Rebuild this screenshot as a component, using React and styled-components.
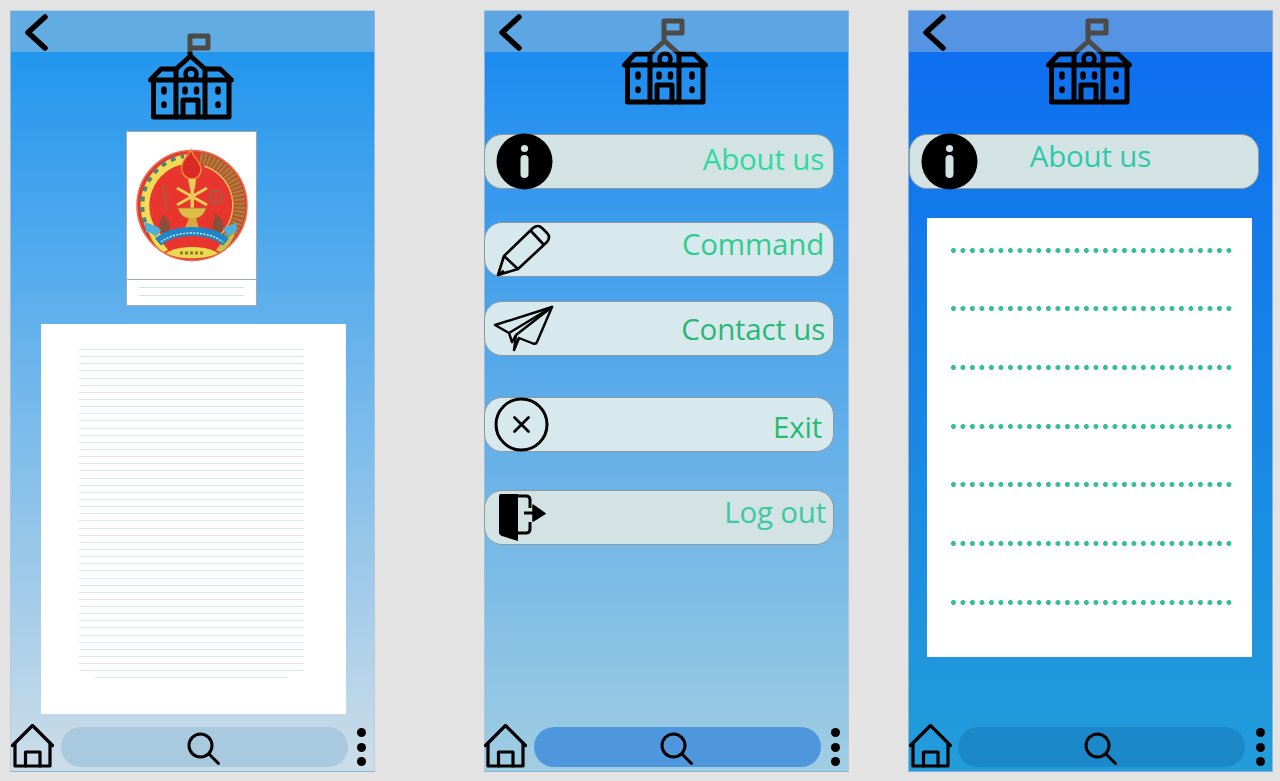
import React from 'react';
import styled, { createGlobalStyle } from 'styled-components';

const GlobalStyle = createGlobalStyle`
  html, body {
    margin: 0;
    padding: 0;
    background: #e3e3e3;
    overflow: hidden;
  }
  * { box-sizing: border-box; }
`;

const Page = styled.div`
  width: 1280px;
  height: 781px;
  padding: 10px 0 0 10px;
  display: flex;
  font-family: "Open Sans", "Noto Sans", sans-serif;
`;

const Phone = styled.div`
  width: 365px;
  height: 762px;
  margin-left: ${(p) => p.$left || 0}px;
  display: flex;
  flex-direction: column;
  border: 1px solid rgba(185, 198, 210, 0.7);
  background: linear-gradient(180deg, ${(p) => p.$from} 5%, ${(p) => p.$to} 100%);
`;

const TopBar = styled.div`
  height: 41px;
  flex: none;
  padding-left: 12px;
  background: rgba(219, 216, 204, 0.35);
  position: relative;
  z-index: 2;
  svg { display: block; }
`;

const LogoWrap = styled.div`
  height: 87px;
  flex: none;
  margin-top: ${(p) => p.$top}px;
  display: flex;
  justify-content: center;
  padding-right: ${(p) => p.$right}px;
`;

const Content = styled.div`
  flex: 1;
  display: flex;
  flex-direction: column;
  align-items: flex-start;
`;

const CrestCard = styled.div`
  width: 131px;
  height: 175px;
  margin: 11px 0 0 115px;
  background: #fff;
  border: 1px solid #a3a8ad;
  display: flex;
  flex-direction: column;
`;

const CrestArea = styled.div`
  height: 148px;
  flex: none;
  padding: 16px 0 0 9px;
  border-bottom: 1px solid #a3a8ad;
  svg { display: block; }
`;

const CrestCaption = styled.div`
  flex: 1;
  display: flex;
  flex-direction: column;
  align-items: center;
  gap: 7px;
  padding-top: 7px;
`;

const CaptionLine = styled.div`
  width: 105px;
  height: 1px;
  background: #d3e5ea;
`;

const TextSheet = styled.div`
  width: 305px;
  height: 390px;
  margin: 18px 0 0 30px;
  padding: 25px 0 0 38px;
  background: #fff;
  display: flex;
  flex-direction: column;
  align-items: flex-start;
  gap: 6.15px;
`;

const SheetLine = styled.div`
  width: ${(p) => p.$width}px;
  height: 1px;
  margin-left: ${(p) => p.$indent || 0}px;
  background: #d9e8ee;
`;

const MenuList = styled.div`
  display: flex;
  flex-direction: column;
  padding-top: ${(p) => p.$top}px;
  margin-left: ${(p) => p.$left || 0}px;
`;

const MenuButton = styled.div`
  width: 350px;
  height: 55px;
  margin-top: ${(p) => p.$gap || 0}px;
  padding: 0 ${(p) => p.$pad}px 0 ${(p) => p.$iconLeft}px;
  display: flex;
  align-items: center;
  justify-content: space-between;
  border: 1px solid #8a9aa2;
  border-radius: 18px;
  background: ${(p) => p.$bg};
  svg { display: block; flex: none; overflow: visible; }
`;

const MenuLabel = styled.span`
  color: ${(p) => p.$color};
  font-size: 29.5px;
  line-height: 40px;
  letter-spacing: -0.2px;
  margin-bottom: ${(p) => p.$lift || 0}px;
`;

const DotSheet = styled.div`
  width: 325px;
  height: 439px;
  margin: 29px 0 0 18px;
  padding: 29.5px 20px 0 24px;
  background: #fff;
  display: flex;
  flex-direction: column;
  gap: 53.7px;
`;

const DotLine = styled.div`
  height: 5px;
  background-image: radial-gradient(circle at 2.5px 2.5px, #35c08f 2.2px, transparent 2.7px);
  background-size: 9.5px 5px;
  background-repeat: repeat-x;
`;

const BottomBar = styled.div`
  flex: none;
  height: 48px;
  margin-left: ${(p) => p.$shift || 0}px;
  display: flex;
  align-items: center;
  svg { display: block; flex: none; }
`;

const HomeLink = styled.div`
  margin-bottom: 2px;
`;

const SearchPill = styled.div`
  width: 287px;
  height: 40px;
  margin-left: ${(p) => p.$gap}px;
  border-radius: 20px;
  background: ${(p) => p.$bg};
  display: flex;
  align-items: center;
  justify-content: center;
  padding: 3px 2px 0 0;
`;

const MoreDots = styled.div`
  margin-left: ${(p) => p.$gap}px;
  display: flex;
  flex-direction: column;
  gap: 5.5px;
`;

const MoreDot = styled.span`
  width: 9px;
  height: 9px;
  border-radius: 50%;
  background: #000;
`;

const BackIcon = () => (
  <svg width="30" height="42" viewBox="0 0 30 42" fill="none" stroke="#000" strokeWidth="5.5" strokeLinecap="round" strokeLinejoin="round">
    <path d="M22 6 L5 21.5 L22 37" />
  </svg>
);

const SchoolLogo = () => (
  <svg width="86" height="87" viewBox="0 0 86 87" fill="none" stroke="#000" strokeWidth="5" strokeLinejoin="round" strokeLinecap="round">
    <path d="M42 21 V3 H60 V15 H42" />
    <path d="M2.5 47 L13 36 H28 L42.5 23 L57 36 H72 L83.5 47 Z" />
    <path d="M5.5 47 V84 H81 V47" />
    <path d="M28 36 V84 M57 36 V84" />
    <path d="M35 84 V67 H50 V84" />
    <circle cx="43" cy="41" r="5.5" strokeWidth="4.5" />
    <g strokeWidth="5.5">
      <path d="M16 56 V59 M16 71 V72.5 M37 56 V59 M48.5 56 V59 M70 56 V59 M70 71 V72.5" />
    </g>
  </svg>
);

const Crest = () => (
  <svg width="112" height="115" viewBox="0 0 112 115">
    <circle cx="56" cy="57.5" r="55" fill="#e8362e" stroke="#ea6b4e" strokeWidth="1.5" />
    <path d="M23.5 90 A46 46 0 0 1 51 11.8" fill="none" stroke="#f2dc55" strokeWidth="11" />
    <path d="M20 92 A50 50 0 0 1 48 8" fill="none" stroke="#5f7f72" strokeWidth="4.5" strokeDasharray="5 5.5" />
    <path d="M26 86 A41 41 0 0 1 50 17" fill="none" stroke="#e8362e" strokeWidth="2.5" />
    <path d="M64 10 A48 48 0 0 1 90 91" fill="none" stroke="#8f8c3a" strokeWidth="11" strokeDasharray="2.5 1.5" />
    <path d="M68 18 A41 41 0 0 1 84 87" fill="none" stroke="#e3c45a" strokeWidth="1.5" />
    <path d="M55 2 C50 10 44 15 46 23 C48 29 52 31 56 31 C60 31 65 28 65 21 C65 14 58 11 55 2 Z" fill="#d92a26" stroke="#f08a3c" strokeWidth="1.5" />
    <path d="M52 31 H60 L59 41 H54 Z" fill="#e9c85c" />
    <path d="M41 57 L71 40 M41 40 L71 57" stroke="#f0d257" strokeWidth="2.6" />
    <path d="M54.5 40 H58 V74 H54.5 Z" fill="#e9c85c" />
    <path d="M42 60 H70 C68 68 63 70 56 71 C49 70 44 68 42 60 Z" fill="#e0bb48" stroke="#a8732a" strokeWidth="0.7" />
    <path d="M49 80 L53 70 H60 L63 80 Z" fill="#d9a63f" />
    <circle cx="80" cy="49" r="6.5" fill="none" stroke="#a85a4a" strokeWidth="2" />
    <path d="M80 42 V56 M73.5 49 H86.5" stroke="#a85a4a" strokeWidth="0.8" />
    <path d="M27 36 L31 62" stroke="#a85a4a" strokeWidth="1.6" />
    <path d="M26 44 L34 50" stroke="#a85a4a" strokeWidth="1" />
    <path d="M24 83 C22 76 26 72 26 66 C31 71 37 76 33 84 L28 86 Z" fill="#8a4f3a" />
    <path d="M77 82 C75 75 80 71 79 65 C85 70 90 75 86 83 L81 86 Z" fill="#8a4f3a" />
    <path d="M8 74 C14 76 20 77 25 82 L21 88 C15 86 12 85 10 84 Z" fill="#4fb0dc" />
    <path d="M100 74 C96 77 92 78 87 80 L91 88 C96 86 99 85 101 82 Z" fill="#4fb0dc" />
    <path d="M13 84 L24 92 L32 102 L28 104 C20 100 15 92 13 84 Z" fill="#f0df50" />
    <path d="M99 84 L88 92 L80 102 L84 104 C92 100 97 92 99 84 Z" fill="#c9c04a" />
    <path d="M30 105 C42 97 70 97 82 105 C72 112 40 112 30 105 Z" fill="#ecd94f" />
    <path d="M22 94 C38 80 74 80 90 94" fill="none" stroke="#1f87c9" strokeWidth="9" />
    <path d="M25 94 C40 82 72 82 87 94" fill="none" stroke="#d8eef5" strokeWidth="1.4" strokeDasharray="2 1.4" />
    <path d="M44 105 H68" stroke="#8a7a2a" strokeWidth="3" strokeDasharray="3 2" />
  </svg>
);

const InfoIcon = ({ bg }) => (
  <svg width="57" height="57" viewBox="0 0 57 57">
    <circle cx="28.5" cy="28.5" r="28" fill="#000" />
    <circle cx="28.5" cy="15.5" r="3.6" fill={bg} />
    <rect x="24.5" y="22" width="8" height="23" rx="4" fill={bg} />
  </svg>
);

const PencilIcon = () => (
  <svg width="54" height="54" viewBox="0 0 54 54" fill="none" stroke="#000" strokeWidth="2.6" strokeLinejoin="round">
    <path d="M1 52 L7 33 L36 5 Q41 1 45 5 L50 10 Q54 14 50 19 L21 46 Z" />
    <path d="M7 33 L21 46 M34 8 L47 22" />
    <path d="M1 52 L7 48" strokeWidth="3.2" />
  </svg>
);

const PlaneIcon = () => (
  <svg width="58" height="45" viewBox="0 0 58 45" fill="none" stroke="#000" strokeWidth="2.4" strokeLinejoin="round" strokeLinecap="round">
    <path d="M58 1 L1 19 L15 27 L18 36" />
    <path d="M58 1 L43 36 Q42 38.5 39 37.5 L25 32 L20 44 L22 29 L58 1 Z" />
    <path d="M15 27 L58 1 M18 36 L22 29 M25 32 L20 44" />
  </svg>
);

const CloseIcon = () => (
  <svg width="55" height="55" viewBox="0 0 55 55" fill="none" stroke="#000" strokeLinecap="round">
    <circle cx="27.5" cy="27.5" r="25.5" strokeWidth="3" />
    <path d="M20.5 20.5 L34.5 34.5 M34.5 20.5 L20.5 34.5" strokeWidth="2.8" />
  </svg>
);

const LogoutIcon = () => (
  <svg width="47" height="47" viewBox="0 0 47 47">
    <path d="M2 0 H19 V47 L3 42 Q0 41 0 38 V2 Q0 0 2 0 Z" fill="#000" />
    <path d="M19 2 H27 Q31 2 31 6 V14 M31 28 V35 Q31 39 27 39 H19" fill="none" stroke="#000" strokeWidth="3" />
    <path d="M25 19 H35" fill="none" stroke="#000" strokeWidth="3" />
    <path d="M34 11 L46 19.5 L34 27 Z" fill="#000" strokeLinejoin="round" stroke="#000" strokeWidth="1.5" />
  </svg>
);

const HomeIcon = () => (
  <svg width="43" height="44" viewBox="0 0 43 44" fill="none" stroke="#000" strokeWidth="3.2" strokeLinejoin="round" strokeLinecap="round">
    <path d="M1.5 21.5 L21.5 1.5 L41.5 21.5" />
    <path d="M4 19 V42 H39 V19" />
    <path d="M14.5 42 V28 H29 V42" />
  </svg>
);

const SearchIcon = () => (
  <svg width="36" height="36" viewBox="0 0 36 36" fill="none" stroke="#000" strokeWidth="3" strokeLinecap="round">
    <circle cx="14.5" cy="14.5" r="11.5" />
    <path d="M23 23 L32.5 32.5" />
  </svg>
);

const PhoneBottom = ({ pill, shift, pillGap, dotsGap }) => (
  <BottomBar $shift={shift}>
    <HomeLink><HomeIcon /></HomeLink>
    <SearchPill $bg={pill} $gap={pillGap}>
      <SearchIcon />
    </SearchPill>
    <MoreDots $gap={dotsGap}>
      <MoreDot />
      <MoreDot />
      <MoreDot />
    </MoreDots>
  </BottomBar>
);

const sheetLines = Array.from({ length: 46 }, (_, i) => i);
const dotLines = Array.from({ length: 7 }, (_, i) => i);

export default function App() {
  return (
    <Page>
      <GlobalStyle />

      <Phone $from="#2196ee" $to="#cddde8">
        <TopBar><BackIcon /></TopBar>
        <LogoWrap $top={-19} $right={3}><SchoolLogo /></LogoWrap>
        <Content>
          <CrestCard>
            <CrestArea><Crest /></CrestArea>
            <CrestCaption>
              <CaptionLine />
              <CaptionLine />
            </CrestCaption>
          </CrestCard>
          <TextSheet>
            {sheetLines.map((i) => <SheetLine key={i} $width={225} />)}
            <SheetLine $width={193} $indent={16} />
          </TextSheet>
        </Content>
        <PhoneBottom pill="#a9c9df" pillGap={7} dotsGap={9} />
      </Phone>

      <Phone $left={109} $from="#1c8cf0" $to="#a0cde2">
        <TopBar><BackIcon /></TopBar>
        <LogoWrap $top={-34} $right={4}><SchoolLogo /></LogoWrap>
        <Content>
          <MenuList $top={29} $left={-1}>
            <MenuButton $bg="#d3e3e4" $iconLeft={11} $pad={9}>
              <InfoIcon bg="#d3e3e4" />
              <MenuLabel $color="#2fd9a0" $lift={6}>About us</MenuLabel>
            </MenuButton>
            <MenuButton $gap={33} $bg="#d8e9ee" $iconLeft={12} $pad={9}>
              <PencilIcon />
              <MenuLabel $color="#30cb8d" $lift={12}>Command</MenuLabel>
            </MenuButton>
            <MenuButton $gap={24} $bg="#d8e9ee" $iconLeft={9} $pad={8}>
              <PlaneIcon />
              <MenuLabel $color="#28b874">Contact us</MenuLabel>
            </MenuButton>
            <MenuButton $gap={41} $bg="#d8e9ee" $iconLeft={9} $pad={11}>
              <CloseIcon />
              <MenuLabel $color="#27bb6e" $lift={-4}>Exit</MenuLabel>
            </MenuButton>
            <MenuButton $gap={38} $bg="#d3e3e4" $iconLeft={14} $pad={7}>
              <LogoutIcon />
              <MenuLabel $color="#3cc8a2" $lift={12}>Log out</MenuLabel>
            </MenuButton>
          </MenuList>
        </Content>
        <PhoneBottom pill="#4f97dc" shift={-1} pillGap={7} dotsGap={10} />
      </Phone>

      <Phone $left={59} $from="#0e6ff0" $to="#229dda">
        <TopBar><BackIcon /></TopBar>
        <LogoWrap $top={-34} $right={3}><SchoolLogo /></LogoWrap>
        <Content>
          <MenuList $top={29}>
            <MenuButton $bg="#d3e3e4" $iconLeft={11} $pad={107}>
              <InfoIcon bg="#d3e3e4" />
              <MenuLabel $color="#2fc8ac" $lift={12}>About us</MenuLabel>
            </MenuButton>
          </MenuList>
          <DotSheet>
            {dotLines.map((i) => <DotLine key={i} />)}
          </DotSheet>
        </Content>
        <PhoneBottom pill="#1a88c9" pillGap={6} dotsGap={11} />
      </Phone>
    </Page>
  );
}
